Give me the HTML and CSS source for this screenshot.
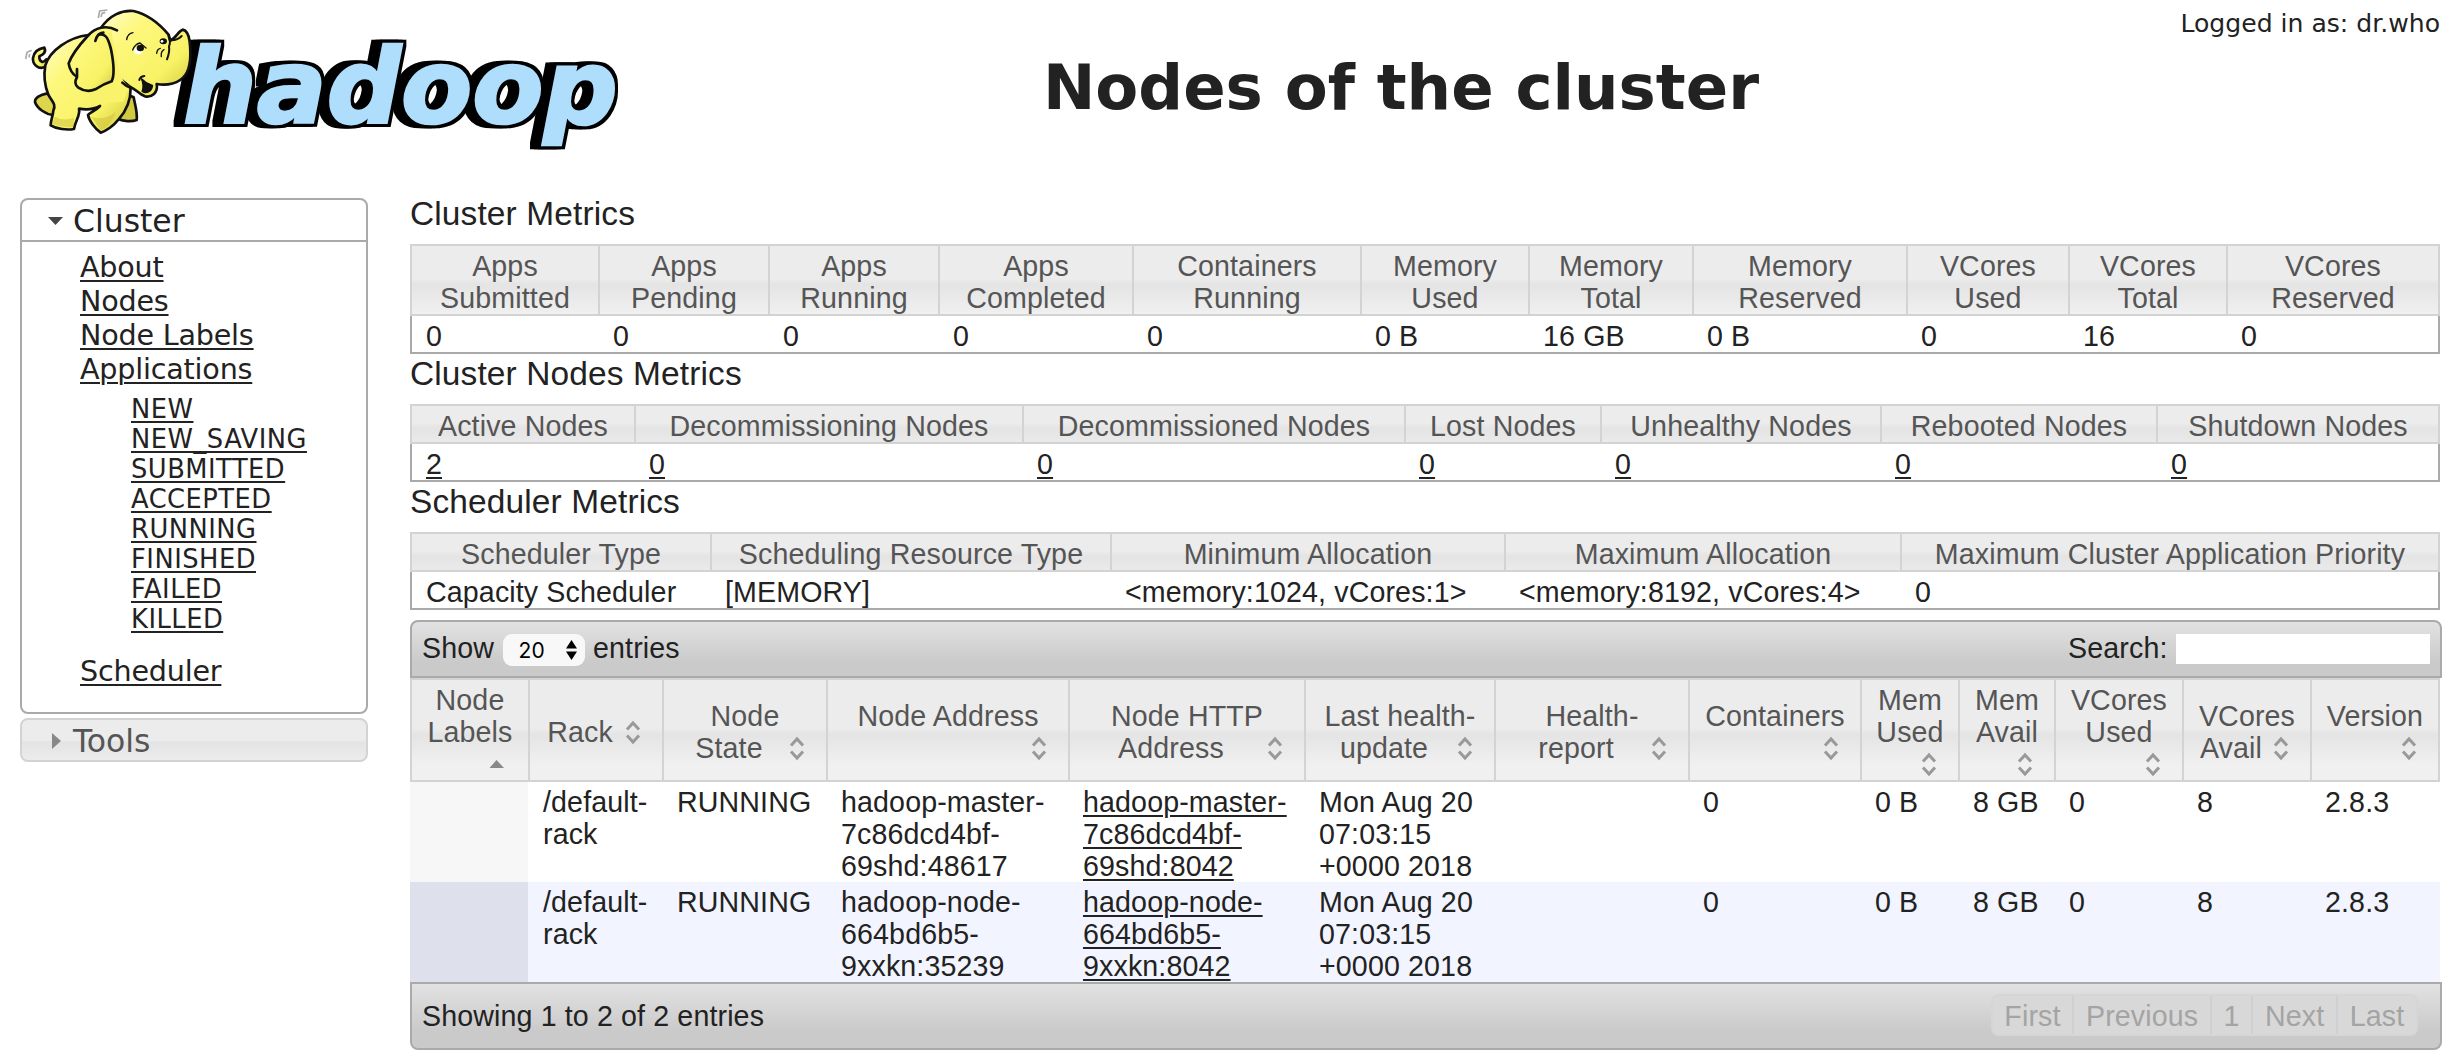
FILE: index.html
```html
<!DOCTYPE html>
<html lang="en">
<head>
<meta charset="utf-8">
<title>Nodes of the cluster</title>
<link rel="stylesheet" href="styles.css">
</head>
<body>
<svg class="defs" width="0" height="0" aria-hidden="true">
  <symbol id="sort" viewBox="0 0 32 32"><path d="M9 13.500 15 7 21 13.500M9 19.500 15 26 21 19.500" fill="none" stroke="#999" stroke-width="3"/></symbol>
  <symbol id="asc" viewBox="0 0 32 32"><path d="M5.500 20 12.500 12 20 20Z" fill="#888"/></symbol>
</svg>

<header class="header">
  <svg class="logo" viewBox="0 0 1920 480" role="img" aria-label="hadoop">
    <defs>
      <linearGradient id="skin" x1="0" y1="0" x2="1" y2="1">
        <stop offset="0" stop-color="#fffdd0"/><stop offset=".3" stop-color="#fdf87c"/><stop offset=".7" stop-color="#f8f266"/><stop offset="1" stop-color="#cfc63c"/>
      </linearGradient>
      <filter id="extrude" x="-5%" y="-10%" width="110%" height="120%" color-interpolation-filters="sRGB">
        <feMorphology in="SourceAlpha" operator="dilate" radius="9" result="edge"/>
        <feOffset in="edge" dx="-12" result="e1"/>
        <feOffset in="edge" dx="-24" result="e2"/>
        <feMerge><feMergeNode in="e2"/><feMergeNode in="e1"/><feMergeNode in="edge"/><feMergeNode in="SourceGraphic"/></feMerge>
      </filter>
    </defs>
    <text class="word" x="549" y="369" textLength="1304" lengthAdjust="spacingAndGlyphs" filter="url(#extrude)">hadoop</text>
    <g stroke="#111" stroke-width="8" stroke-linejoin="round" stroke-linecap="round" fill="url(#skin)">
      <path d="M137 200C115 212 97 192 99 174C102 155 115 146 133 143C140 157 129 164 118 169C117 184 129 192 139 178"/>
      <path d="M142 280C120 284 104 294 105 306C111 325 138 344 160 345L178 320Z" fill="#ddd54c"/>
      <path d="M385 285L401 292C405 315 413 338 410 360C395 366 370 364 355 357L350 335Z" fill="#d2c942"/>
      <path d="M265 105C207 112 150 150 136 196C130 230 136 262 145 284C154 303 170 312 160 332C159 348 152 360 152 376C170 387 200 391 222 387C226 362 242 345 237 326C260 330 282 328 300 318C287 332 270 337 264 345C267 362 285 386 302 398C318 393 342 377 356 358C378 334 392 300 392 264L370 160Z"/>
      <path d="M303 84C328 46 365 30 400 33C445 43 482 76 505 103L510 122C529 115 533 94 548 89C562 92 567 107 569 125C574 170 571 204 556 225C538 251 500 258 470 252C475 278 455 293 435 289C415 282 409 268 390 260L340 220Z"/>
      <path d="M330 80C350 150 350 240 388 258L370 305L300 310L210 230L250 115Z" fill="#f9f36c" stroke="none"/>
      <path d="M351 91C318 73 285 83 263 108C239 134 215 165 206 190C208 204 217 222 231 231C224 244 225 256 235 263C253 275 270 275 286 268C303 257 320 249 335 244C345 224 338 173 333 148C324 111 315 99 296 104"/>
      <path d="M310 98Q292 99 286 123M231 207L231 229M367 248Q378 259 392 263" fill="none"/>
      <path d="M425 237C432 254 430 266 427 274C440 283 455 273 457 257C444 253 434 247 425 237Z" fill="#111" stroke-width="5"/>
      <path d="M418 240Q420 230 433 228M507 105Q513 123 507 140Q510 154 501 178M515 121Q533 120 545 108" fill="none" stroke-width="6"/>
      <path d="M380 119Q383 100 399 98M398 150Q405 132 420 129L438 144M470 160Q471 147 481 145M484 170Q482 154 492 149" fill="none" stroke-width="4"/>
    </g>
    <ellipse cx="415" cy="152" rx="12" ry="11" fill="#fff"/>
    <ellipse cx="421" cy="144" rx="11" ry="10" fill="#111"/>
    <ellipse cx="490" cy="124" rx="11" ry="9" fill="#111"/>
    <circle cx="486" cy="124" r="4" fill="#fff"/>
    <path d="M165 350Q187 364 222 354L220 381Q190 384 157 373ZM274 350Q310 364 347 337Q335 378 303 390Z" fill="#c9c03a" opacity=".5"/>
    <path d="M295 54L299 33L322 30M303 51L306 40L316 37M77 177L81 157L95 151M87 172L89 162" fill="none" stroke="#aaa" stroke-width="5"/>
  </svg>
  <h1 class="title">Nodes of the cluster</h1>
  <div class="user">Logged in as: dr.who</div>
</header>

<div class="page">
  <nav class="nav">
    <div class="nav-open">
      <h3 class="nav-head"><svg class="tri" viewBox="0 0 16 16"><path d="M0 4H15L7.500 12Z" fill="#454545"/></svg>Cluster</h3>
      <div class="nav-body">
        <a>About</a><a>Nodes</a><a>Node Labels</a><a>Applications</a>
        <div class="nav-sub"><a>NEW</a><a>NEW_SAVING</a><a>SUBMITTED</a><a>ACCEPTED</a><a>RUNNING</a><a>FINISHED</a><a>FAILED</a><a>KILLED</a></div>
        <a>Scheduler</a>
      </div>
    </div>
    <h3 class="nav-head nav-closed"><svg class="tri" viewBox="0 0 16 16"><path d="M4 0V16L13 8Z" fill="#888"/></svg>Tools</h3>
  </nav>

  <main class="main">
    <h3 class="caption">Cluster Metrics</h3>
    <table class="metrics">
      <colgroup><col style="width:190px"><col style="width:170px"><col style="width:170px"><col style="width:194px"><col style="width:228px"><col style="width:168px"><col style="width:164px"><col style="width:214px"><col style="width:162px"><col style="width:158px"><col style="width:212px"></colgroup>
      <thead><tr><th>Apps<br>Submitted</th><th>Apps<br>Pending</th><th>Apps<br>Running</th><th>Apps<br>Completed</th><th>Containers<br>Running</th><th>Memory<br>Used</th><th>Memory<br>Total</th><th>Memory<br>Reserved</th><th>VCores<br>Used</th><th>VCores<br>Total</th><th>VCores<br>Reserved</th></tr></thead>
      <tbody><tr><td>0</td><td>0</td><td>0</td><td>0</td><td>0</td><td>0 B</td><td>16 GB</td><td>0 B</td><td>0</td><td>16</td><td>0</td></tr></tbody>
    </table>

    <h3 class="caption">Cluster Nodes Metrics</h3>
    <table class="metrics">
      <colgroup><col style="width:226px"><col style="width:388px"><col style="width:382px"><col style="width:196px"><col style="width:280px"><col style="width:276px"><col style="width:282px"></colgroup>
      <thead><tr><th>Active Nodes</th><th>Decommissioning Nodes</th><th>Decommissioned Nodes</th><th>Lost Nodes</th><th>Unhealthy Nodes</th><th>Rebooted Nodes</th><th>Shutdown Nodes</th></tr></thead>
      <tbody><tr><td><a>2</a></td><td><a>0</a></td><td><a>0</a></td><td><a>0</a></td><td><a>0</a></td><td><a>0</a></td><td><a>0</a></td></tr></tbody>
    </table>

    <h3 class="caption">Scheduler Metrics</h3>
    <table class="metrics">
      <colgroup><col style="width:302px"><col style="width:400px"><col style="width:394px"><col style="width:396px"><col style="width:538px"></colgroup>
      <thead><tr><th>Scheduler Type</th><th>Scheduling Resource Type</th><th>Minimum Allocation</th><th>Maximum Allocation</th><th>Maximum Cluster Application Priority</th></tr></thead>
      <tbody><tr><td>Capacity Scheduler</td><td>[MEMORY]</td><td>&lt;memory:1024, vCores:1&gt;</td><td>&lt;memory:8192, vCores:4&gt;</td><td>0</td></tr></tbody>
    </table>

    <div class="bar bar-top">
      <div class="length">Show <span class="select">20<svg class="updown" viewBox="0 0 11 20"><path d="M0 8.500 5.500 0 11 8.500ZM0 11.500H11L5.500 20Z"/></svg></span> entries</div>
      <label class="search">Search: <input type="text" aria-label="Search"></label>
    </div>
    <table class="metrics nodes">
      <colgroup><col style="width:120px"><col style="width:134px"><col style="width:164px"><col style="width:242px"><col style="width:236px"><col style="width:190px"><col style="width:194px"><col style="width:172px"><col style="width:98px"><col style="width:96px"><col style="width:128px"><col style="width:128px"><col style="width:128px"></colgroup>
      <thead><tr>
        <th>Node<br>Labels<br><svg class="sort"><use href="#asc"/></svg></th>
        <th>Rack<svg class="sort"><use href="#sort"/></svg></th>
        <th>Node<br>State<svg class="sort"><use href="#sort"/></svg></th>
        <th>Node Address<br><svg class="sort"><use href="#sort"/></svg></th>
        <th>Node HTTP<br>Address<svg class="sort"><use href="#sort"/></svg></th>
        <th>Last health-<br>update<svg class="sort"><use href="#sort"/></svg></th>
        <th>Health-<br>report<svg class="sort"><use href="#sort"/></svg></th>
        <th>Containers<br><svg class="sort"><use href="#sort"/></svg></th>
        <th>Mem<br>Used<br><svg class="sort"><use href="#sort"/></svg></th>
        <th>Mem<br>Avail<br><svg class="sort"><use href="#sort"/></svg></th>
        <th>VCores<br>Used<br><svg class="sort"><use href="#sort"/></svg></th>
        <th>VCores<br>Avail<svg class="sort"><use href="#sort"/></svg></th>
        <th>Version<br><svg class="sort"><use href="#sort"/></svg></th>
      </tr></thead>
      <tbody>
        <tr><td></td><td>/default-<br>rack</td><td>RUNNING</td><td>hadoop-master-<br>7c86dcd4bf-<br>69shd:48617</td><td><a>hadoop-master-<br>7c86dcd4bf-<br>69shd:8042</a></td><td>Mon Aug 20<br>07:03:15<br>+0000 2018</td><td></td><td>0</td><td>0 B</td><td>8 GB</td><td>0</td><td>8</td><td>2.8.3</td></tr>
        <tr><td></td><td>/default-<br>rack</td><td>RUNNING</td><td>hadoop-node-<br>664bd6b5-<br>9xxkn:35239</td><td><a>hadoop-node-<br>664bd6b5-<br>9xxkn:8042</a></td><td>Mon Aug 20<br>07:03:15<br>+0000 2018</td><td></td><td>0</td><td>0 B</td><td>8 GB</td><td>0</td><td>8</td><td>2.8.3</td></tr>
      </tbody>
    </table>
    <div class="bar bar-bottom">
      <div>Showing 1 to 2 of 2 entries</div>
      <div class="pages"><span>First</span><span>Previous</span><span>1</span><span>Next</span><span>Last</span></div>
    </div>
  </main>
</div>
</body>
</html>
```

FILE: styles.css
```css
* { box-sizing: border-box; }

body {
  margin: 0;
  background: #fff;
  color: #222;
  font: 28.6px/32px "Liberation Sans", Arial, sans-serif;
}

h1, h3 { margin: 0; font-weight: normal; }

a {
  color: #222;
  text-decoration: underline;
  text-decoration-thickness: 2px;
  text-underline-offset: 3px;
}

.defs { display: block; }

/* Header */
.header {
  display: grid;
  grid-template-columns: 640px 1522px 1fr;
  height: 194px;
  font-family: "DejaVu Sans", Verdana, sans-serif;
}
.logo { width: 640px; height: 160px; }
.word {
  font: italic bold 312px "DejaVu Sans", Verdana, sans-serif;
  fill: #aedefc;
  stroke: #aedefc;
  stroke-width: 8px;
}
.title {
  padding-top: 51px;
  text-align: center;
  font-size: 62.6px;
  line-height: 74px;
  font-weight: bold;
}
.user {
  padding: 8px 14px 0 0;
  text-align: right;
  white-space: nowrap;
  font-size: 25.1px;
}

/* Columns */
.page { display: flex; gap: 42px; padding-left: 20px; }

/* Navigation */
.nav {
  width: 348px;
  padding-top: 4px;
  font-family: "DejaVu Sans", Verdana, sans-serif;
}
.nav-open {
  height: 516px;
  border: 2px solid #aaa;
  border-radius: 8px;
}
.nav-head {
  display: flex;
  align-items: center;
  height: 42px;
  padding: 1px 0 0 26px;
  border-bottom: 2px solid #aaa;
  font-size: 31.46px;
}
.tri { width: 16px; height: 16px; margin-right: 9px; }
.nav-closed {
  height: 44px;
  margin-top: 4px;
  border: 2px solid #d3d3d3;
  border-radius: 8px;
  color: #555;
  background: linear-gradient(#ececec 50%, #e4e4e4 56%, #ececec);
}
.nav-body { padding: 8px 0 0 58px; line-height: 34px; letter-spacing: -.2px; }
.nav-body a { display: block; width: max-content; }
.nav-sub { padding: 8px 0 20px 51px; font-size: 25.74px; line-height: 30px; letter-spacing: .5px; }

/* Metric tables */
.main { width: 2032px; letter-spacing: .13px; }
.caption { height: 50px; padding-top: 1px; font-size: 33.46px; line-height: 38px; }
.metrics {
  width: 2030px;
  table-layout: fixed;
  border-collapse: separate;
  border-spacing: 0;
}
.metrics th {
  padding: 4px 12px 0;
  border: solid #d3d3d3;
  border-width: 2px 2px 2px 0;
  color: #555;
  font-weight: normal;
  text-align: center;
  background: linear-gradient(#ececec calc(50% - 1px), #e4e4e4 calc(50% + 4px), #f0f0f0 calc(50% + 34px));
}
.metrics th:first-child { border-left-width: 2px; }
.metrics td {
  padding: 4px 11px 0 13px;
  vertical-align: top;
  border-bottom: 2px solid #aaa;
}
.metrics td:first-child { padding-left: 14px; border-left: 2px solid #aaa; }
.metrics td:last-child { border-right: 2px solid #aaa; }

/* Node list */
.bar {
  display: flex;
  justify-content: space-between;
  width: 2032px;
  border: 2px solid #aaa;
  background: linear-gradient(#e2e2e2, #cacaca 75%);
}
.bar-top { height: 58px; margin-top: 10px; padding: 10px 10px 0; border-radius: 8px 8px 0 0; }
.bar-bottom { height: 68px; padding: 10px 22px 0 10px; border-radius: 0 0 8px 8px; line-height: 44px; }
.length, .search { display: flex; gap: 8.5px; }
.select {
  display: flex;
  align-items: center;
  justify-content: space-between;
  width: 82px;
  height: 32px;
  margin-top: 2px;
  padding: 0 8px 0 16px;
  border-radius: 9px;
  background: #f8f8f8;
  color: #000;
  font: 21px Inter, sans-serif;
}
.updown { width: 11px; height: 20px; }
.search input { width: 254px; height: 30px; margin-top: 2px; padding: 0; border: 0; background: #fff; }

.nodes thead tr { height: 104px; }
.sort { float: right; width: 32px; height: 32px; }
.nodes tbody tr { height: 100px; }
.nodes tbody tr:nth-child(2) { background: #f2f5ff; }
.nodes td, .nodes td:last-child { border: 0; }
.nodes td:first-child {
  border: 0;
  border-right: 2px solid transparent;
  background: #f7f7f7 padding-box;
}
.nodes tr:nth-child(2) td:first-child { background-color: #dee1eb; }

.pages { display: flex; height: 42px; border: 2px solid #d6d6d6; border-radius: 8px; color: #a4a4a4; background: #d8d8d8; line-height: 40px; }
.pages span { padding: 0 11.7px; border-right: 2px solid #d0d0d0; }
.pages span:last-child { border: 0; }
```
